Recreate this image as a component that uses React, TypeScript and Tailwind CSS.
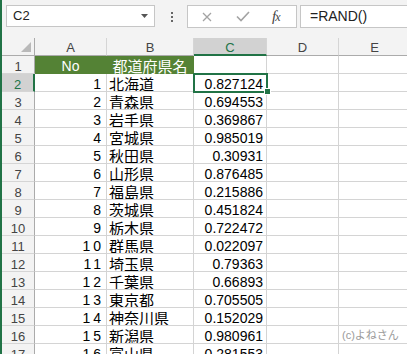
import React from 'react'

const rows: [number, string, string][] = [
    [1, '北海道', '0.827124'],
    [2, '青森県', '0.694553'],
    [3, '岩手県', '0.369867'],
    [4, '宮城県', '0.985019'],
    [5, '秋田県', '0.30931'],
    [6, '山形県', '0.876485'],
    [7, '福島県', '0.215886'],
    [8, '茨城県', '0.451824'],
    [9, '栃木県', '0.722472'],
    [10, '群馬県', '0.022097'],
    [11, '埼玉県', '0.79363'],
    [12, '千葉県', '0.66893'],
    [13, '東京都', '0.705505'],
    [14, '神奈川県', '0.152029'],
    [15, '新潟県', '0.980961'],
    [16, '富山県', '0.281553'],
];

const cell = 'h-[18px] shrink-0 border-r border-b border-[#d4d4d4] overflow-hidden whitespace-nowrap';

const RowHead = ({ n, active }: { n: number; active?: boolean }) => (
    <div
        className={
            active
                ? 'w-[33px] h-[18px] shrink-0 bg-[#d2d2d2] border-r-2 border-r-[#217346] border-b border-b-[#d5d5d5] text-center text-[13px] leading-[15px] pt-[3px] text-[#217346]'
                : 'w-[33px] h-[18px] shrink-0 bg-[#f3f3f3] border-r border-r-[#ababab] border-b border-b-[#d5d5d5] text-center text-[13px] leading-[15px] pt-[3px] text-[#444]'
        }
    >
        {n}
    </div>
);

export default function App() {
    return (
        <div className="w-[407px] h-[354px] overflow-hidden bg-white border-l-2 border-[#217346] font-['Liberation_Sans','Noto_Sans_CJK_JP',sans-serif] text-black">

            {/* Name box + formula bar */}
            <div className="h-[38px] bg-[#f3f3f3] flex items-start pt-[5px] pl-[4px]">
                <div className="w-[149px] h-[22px] shrink-0 bg-white border border-[#c6c6c6] flex items-center justify-between pl-[6px] pr-[6px]">
                    <span className="text-[13px] text-[#222]">C2</span>
                    <svg width="7" height="4" viewBox="0 0 7 4">
                        <path d="M0 0h7L3.5 4z" fill="#555" />
                    </svg>
                </div>
                <div className="ml-[16px] mt-[7px] flex flex-col gap-[2px] shrink-0">
                    <span className="w-[2px] h-[2px] bg-[#666]" />
                    <span className="w-[2px] h-[2px] bg-[#666]" />
                    <span className="w-[2px] h-[2px] bg-[#666]" />
                </div>
                <div className="ml-[14px] w-[110px] h-[23px] shrink-0 bg-white border border-[#c6c6c6] flex items-center">
                    <svg width="10" height="10" viewBox="0 0 10 10" className="ml-[14px]" stroke="#a3a3a3" strokeWidth="1.3">
                        <path d="M1 1l8 8M9 1l-8 8" />
                    </svg>
                    <svg width="14" height="11" viewBox="0 0 14 11" className="ml-[24px]" fill="none" stroke="#a3a3a3" strokeWidth="1.6">
                        <path d="M1 5.5l4 4L13 1" />
                    </svg>
                    <span className="ml-[22px] font-['Liberation_Serif',serif] italic text-[15px] text-[#444] tracking-[-1px]">
                        f<span className="text-[12px]">x</span>
                    </span>
                </div>
                <div className="ml-[3px] w-[130px] h-[23px] shrink-0 bg-white border border-[#c6c6c6] pl-[9px] text-[14px] leading-[21px] text-[#222]">
                    =RAND()
                </div>
            </div>

            {/* Column headers */}
            <div className="flex h-[18px] bg-[#f3f3f3] text-[13px] leading-[15px] text-[#444]">
                <div className="w-[33px] h-[18px] shrink-0 border-r border-r-[#ababab] border-b border-b-[#ababab] flex items-end justify-end pr-[3px] pb-[3px]">
                    <svg width="10" height="10" viewBox="0 0 10 10">
                        <path d="M10 0v10H0z" fill="#b9b9b9" />
                    </svg>
                </div>
                <div className="w-[72px] h-[18px] shrink-0 border-r border-r-[#d5d5d5] border-b border-b-[#ababab] text-center pt-[2px]">A</div>
                <div className="w-[87px] h-[18px] shrink-0 border-r border-r-[#d5d5d5] border-b border-b-[#ababab] text-center pt-[2px]">B</div>
                <div className="w-[73px] h-[18px] shrink-0 bg-[#d2d2d2] border-r border-r-[#d5d5d5] border-b-2 border-b-[#217346] text-center pt-[2px] text-[#217346]">C</div>
                <div className="w-[72px] h-[18px] shrink-0 border-r border-r-[#d5d5d5] border-b border-b-[#ababab] text-center pt-[2px]">D</div>
                <div className="w-[72px] h-[18px] shrink-0 border-r border-r-[#d5d5d5] border-b border-b-[#ababab] text-center pt-[2px]">E</div>
            </div>

            {/* Row 1: headings */}
            <div className="flex">
                <RowHead n={1} />
                <div className="w-[72px] h-[18px] shrink-0 bg-[#548235] border-r border-b border-[#548235] text-center text-white text-[14px] leading-[15px] pt-[3px]">No</div>
                <div className="w-[87px] h-[18px] shrink-0 bg-[#548235] border-r border-b border-[#548235] text-center text-white text-[15px] leading-[15px] pt-[3px] whitespace-nowrap">都道府県名</div>
                <div className={`${cell} w-[73px]`} />
                <div className={`${cell} w-[72px]`} />
                <div className={`${cell} w-[72px]`} />
            </div>

            {/* Data rows */}
            {rows.map(([no, pref, val], i) => (
                <div key={no} className="flex">
                    <RowHead n={i + 2} active={i === 0} />
                    <div className={`${cell} w-[72px] text-right text-[14px] leading-[15px] pt-[3px] pr-[2px] tracking-[3px]`}>{no}</div>
                    <div className={`${cell} w-[87px] text-[15px] leading-[15px] pt-[3px] pl-[2px]`}>{pref}</div>
                    <div className={`${cell} w-[73px] text-right text-[14px] leading-[15px] pt-[3px] pr-[3px] ${i === 0 ? 'relative overflow-visible' : ''}`}>
                        {val}
                        {i === 0 && (
                            <>
                                <div className="absolute -left-px -top-px w-[75px] h-[20px] border-2 border-[#217346] pointer-events-none" />
                                <div className="absolute left-[70px] top-[14px] w-[7px] h-[7px] bg-[#217346] border border-white" />
                            </>
                        )}
                    </div>
                    <div className={`${cell} w-[72px]`} />
                    <div className={`${cell} w-[72px] text-[11px] leading-[15px] pt-[2px] pl-[3px] text-[#9a9a9a]`}>
                        {no === 15 ? '(c)よねさん' : ''}
                    </div>
                </div>
            ))}
        </div>
    );
}
